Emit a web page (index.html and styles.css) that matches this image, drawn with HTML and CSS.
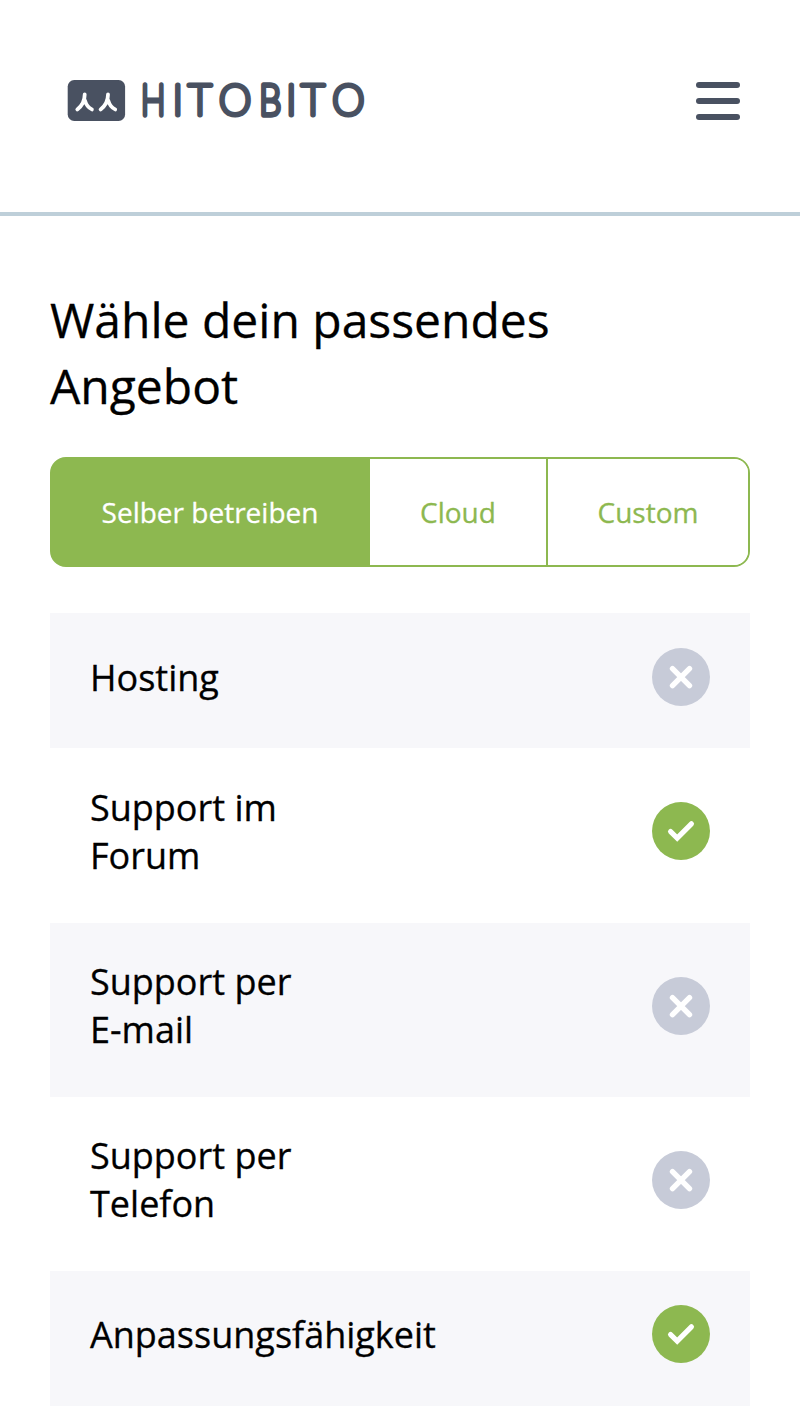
FILE: index.html
```html
<!DOCTYPE html>
<html lang="de">
<head>
<meta charset="utf-8">
<title>Hitobito</title>
<link rel="stylesheet" href="styles.css">
</head>
<body>
<svg class="sprites" width="0" height="0" aria-hidden="true">
  <symbol id="no" viewBox="0 0 58 58"><circle cx="29" cy="29" r="29" fill="#c7cbd8"/><path d="M20.5 20.7L37.5 37.7M37.5 20.7L20.5 37.7" fill="none" stroke="#fff" stroke-width="5.4" stroke-linecap="round"/></symbol>
  <symbol id="yes" viewBox="0 0 58 58"><circle cx="29" cy="29" r="29" fill="#8db850"/><path d="M18.6 29.6L25.2 36L39.4 21.8" fill="none" stroke="#fff" stroke-width="5.2" stroke-linecap="round"/></symbol>
</svg>
<header class="header">
  <svg class="logo" width="310" height="60" viewBox="0 0 310 60" role="img" aria-label="Hitobito">
    <rect x=".7" y="2" width="57.4" height="41" rx="6.5" fill="#495161"/>
    <g fill="none" stroke="#fff" stroke-width="3.8" stroke-linecap="round" stroke-linejoin="round">
      <path d="M17.7 16.5C17.7 23.5 14.8 28 10.3 31.4M17.9 22.5C19.2 27 21.5 29.8 24.9 31.4"/>
      <path d="M41 16.5C41 23.5 38.1 28 33.6 31.4M41.2 22.5C42.5 27 44.8 29.8 48.2 31.4"/>
    </g>
    <g class="wordmark">
      <text class="narrow" transform="translate(86 37.4) scale(.79 1)">H</text>
      <text y="37.4" x="110.7 132.8 168">ITO</text>
      <text class="narrow" transform="translate(203.2 37.4) scale(.86 1)">B</text>
      <text y="37.4" x="224.3 246 281.4">ITO</text>
    </g>
  </svg>
  <button class="menu" aria-label="Menü"><span></span><span></span><span></span></button>
</header>
<main class="main">
  <h1 class="title">Wähle dein passendes Angebot</h1>
  <nav class="tabs">
    <button class="tab active">Selber betreiben</button>
    <button class="tab">Cloud</button>
    <button class="tab">Custom</button>
  </nav>
  <ul class="features">
    <li class="feature single"><span>Hosting</span><svg class="mark"><use href="#no"/></svg></li>
    <li class="feature"><span>Support im<br>Forum</span><svg class="mark"><use href="#yes"/></svg></li>
    <li class="feature"><span>Support per<br>E-mail</span><svg class="mark"><use href="#no"/></svg></li>
    <li class="feature"><span>Support per<br>Telefon</span><svg class="mark"><use href="#no"/></svg></li>
    <li class="feature single"><span>Anpassungsfähigkeit</span><svg class="mark"><use href="#yes"/></svg></li>
  </ul>
</main>
</body>
</html>
```
FILE: styles.css
```css
* { box-sizing: border-box; }
body { margin: 0; background: #fff; color: #000; font-family: "Open Sans", "Noto Sans", sans-serif; -webkit-text-stroke: .3px currentColor; }
button { font: inherit; background: none; border: 0; padding: 0; }
.sprites { display: block; }
.header { display: flex; justify-content: space-between; align-items: flex-start; height: 216px; padding: 78px 60px 0 67px; border-bottom: 4px solid #becfd9; }
.logo { display: block; overflow: visible; }
.wordmark text { font: 100 41px Lato, sans-serif; text-anchor: middle; fill: #495161; -webkit-text-stroke: 0; stroke: #495161; stroke-width: 5px; stroke-linejoin: round; }
.wordmark .narrow { stroke-width: 5.4px; }
.menu { display: flex; flex-direction: column; gap: 10px; width: 44px; margin-top: 4px; }
.menu span { height: 6px; border-radius: 3px; background: #495161; }
.main { padding: 71px 50px 0; }
.title { margin: 0 0 38px; font-size: 48px; line-height: 66px; font-weight: 400; width: 560px; }
.tabs { display: flex; height: 110px; border: 2px solid #8db850; border-radius: 16px; background: linear-gradient(90deg, #8db850 300px, #fff 300px); overflow: hidden; }
.tab { flex: none; background: #fff; color: #8db850; font-size: 28px; font-weight: 500; width: 176px; }
.tab.active { width: 318px; padding-right: 2px; background: #8db850; color: #fff; }
.tab + .tab + .tab { flex: 1; border-left: 2px solid #8db850; }
.features { list-style: none; margin: 46.4px 0 0; padding: 0; }
.feature { display: flex; justify-content: space-between; align-items: center; height: 174.2px; padding: 0 40px 8px; font-size: 36px; line-height: 48px; }
.feature > span { padding-top: 1px; }
.feature.single { height: 135px; }
.feature.single > span { padding-top: 2px; }
.feature:nth-child(odd) { background: #f7f7fa; }
.mark { flex: none; width: 58px; height: 58px; }
```
